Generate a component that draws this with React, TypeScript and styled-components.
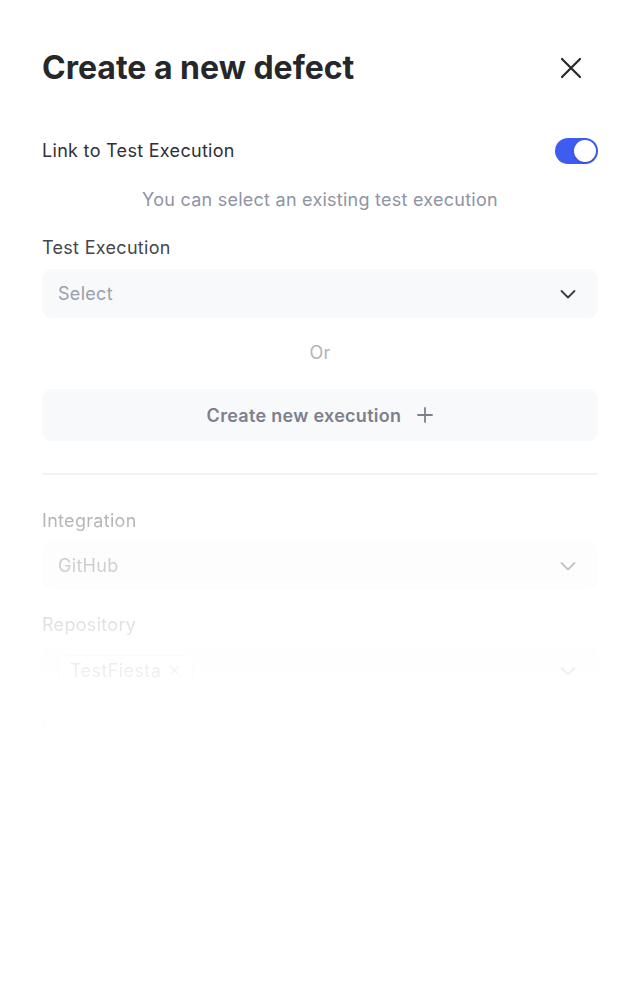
import React from 'react';
import styled, { createGlobalStyle } from 'styled-components';

const GlobalStyle = createGlobalStyle`
  html, body {
    margin: 0;
    padding: 0;
    background: #ffffff;
  }
  body {
    font-family: Inter, "Noto Sans", "Liberation Sans", sans-serif;
    -webkit-font-smoothing: antialiased;
  }
`;

const Panel = styled.div`
  width: 640px;
  min-height: 1006px;
  box-sizing: border-box;
  padding: 48px 42px 0;
  display: flex;
  flex-direction: column;
`;

const Header = styled.div`
  display: flex;
  align-items: center;
  justify-content: space-between;
  height: 40px;
`;

const Title = styled.h1`
  margin: 0;
  font-size: 32px;
  line-height: 40px;
  font-weight: 700;
  color: #26272b;
`;

const CloseButton = styled.button`
  border: none;
  background: none;
  padding: 0;
  width: 24px;
  height: 24px;
  margin-right: 15px;
  display: flex;
  align-items: center;
  justify-content: center;
  color: #26272b;
  cursor: pointer;
`;

const ToggleRow = styled.div`
  margin-top: 50px;
  display: flex;
  align-items: center;
  justify-content: space-between;
  height: 26px;
`;

const RowLabel = styled.span`
  font-size: 18px;
  line-height: 24px;
  letter-spacing: 0.3px;
  color: #2f3037;
`;

const Switch = styled.div<{ on: boolean }>`
  position: relative;
  width: 43px;
  height: 26px;
  border-radius: 13px;
  background: ${p => (p.on ? '#3f5cf1' : '#e5e7eb')};
`;

const Knob = styled.span<{ on: boolean }>`
  position: absolute;
  top: 2px;
  left: ${p => (p.on ? '19px' : '2px')};
  width: 22px;
  height: 22px;
  border-radius: 50%;
  background: #ffffff;
  box-shadow: 0 1px 3px rgba(0, 0, 0, 0.22);
`;

const Hint = styled.p<{ muted?: boolean }>`
  margin: ${p => (p.muted ? '23px 0 0' : '24px 0 0')};
  text-align: center;
  font-size: 18px;
  line-height: 24px;
  letter-spacing: 0.25px;
  color: ${p => (p.muted ? '#b2b5bd' : '#8f94a3')};
`;

const FieldLabel = styled.div<{ gap?: number }>`
  margin-top: ${p => p.gap ?? 24}px;
  font-size: 18px;
  line-height: 24px;
  letter-spacing: 0.3px;
  color: #45464e;
`;

const SelectBox = styled.div<{ gap?: number }>`
  margin-top: ${p => p.gap ?? 9}px;
  height: 49px;
  box-sizing: border-box;
  padding: 0 20px 0 16px;
  border-radius: 10px;
  background: #f8f9fb;
  display: flex;
  align-items: center;
  justify-content: space-between;
`;

const SelectText = styled.span<{ placeholder?: boolean }>`
  font-size: 18px;
  line-height: 24px;
  letter-spacing: 0.3px;
  color: ${p => (p.placeholder ? '#9a9fac' : '#5a5c66')};
`;

const Chevron = styled.svg`
  width: 20px;
  height: 20px;
  flex-shrink: 0;
  color: #3a3b42;
`;

const CreateButton = styled.button`
  margin-top: 24px;
  height: 52px;
  border: none;
  border-radius: 10px;
  background: #f8f9fb;
  display: flex;
  align-items: center;
  justify-content: center;
  gap: 16px;
  font-family: inherit;
  font-size: 18px;
  font-weight: 600;
  letter-spacing: 0.3px;
  color: #7d808b;
  cursor: pointer;
`;

const Divider = styled.hr`
  margin: 32px 0 0;
  border: none;
  height: 2px;
  background: #e3e5ea;
`;

const fade = `linear-gradient(
    to bottom,
    rgba(0, 0, 0, 0.5) 0px,
    rgba(0, 0, 0, 0.48) 50px,
    rgba(0, 0, 0, 0.36) 95px,
    rgba(0, 0, 0, 0.24) 155px,
    rgba(0, 0, 0, 0.12) 200px,
    rgba(0, 0, 0, 0.05) 255px,
    rgba(0, 0, 0, 0) 290px
  )`;

const FadedSection = styled.div`
  display: flex;
  flex-direction: column;
  -webkit-mask-image: ${fade};
  mask-image: ${fade};
`;

const Chip = styled.span`
  display: inline-flex;
  align-items: center;
  gap: 8px;
  height: 31px;
  box-sizing: border-box;
  padding: 0 12px 0 11px;
  border: 1px solid #d9dbe1;
  border-radius: 7px;
  background: #ffffff;
  font-size: 18px;
  letter-spacing: 0.4px;
  color: #30313a;
`;

const ChipX = styled.svg`
  width: 11px;
  height: 11px;
  color: #6b6e78;
`;

const ChevronIcon = () => (
  <Chevron viewBox="0 0 20 20" fill="none" stroke="currentColor" strokeWidth={1.8} strokeLinecap="round" strokeLinejoin="round">
    <path d="M3.5 7l6.5 6.5L16.5 7" />
  </Chevron>
);

export default function App() {
  return (
    <>
      <GlobalStyle />
      <Panel>
        <Header>
          <Title>Create a new defect</Title>
          <CloseButton aria-label="Close">
            <svg width="22" height="22" viewBox="0 0 22 22" fill="none" stroke="currentColor" strokeWidth={2.2} strokeLinecap="round">
              <path d="M2 2l18 18M20 2L2 20" />
            </svg>
          </CloseButton>
        </Header>

        <ToggleRow>
          <RowLabel>Link to Test Execution</RowLabel>
          <Switch on>
            <Knob on />
          </Switch>
        </ToggleRow>

        <Hint>You can select an existing test execution</Hint>

        <FieldLabel>Test Execution</FieldLabel>
        <SelectBox>
          <SelectText placeholder>Select</SelectText>
          <ChevronIcon />
        </SelectBox>

        <Hint muted>Or</Hint>

        <CreateButton>
          Create new execution
          <svg width="16" height="16" viewBox="0 0 16 16" fill="none" stroke="currentColor" strokeWidth={1.8} strokeLinecap="round">
            <path d="M8 1v14M1 8h14" />
          </svg>
        </CreateButton>

        <FadedSection>
          <Divider />

          <FieldLabel gap={34}>Integration</FieldLabel>
          <SelectBox gap={8}>
            <SelectText>GitHub</SelectText>
            <ChevronIcon />
          </SelectBox>

          <FieldLabel gap={23}>Repository</FieldLabel>
          <SelectBox>
            <Chip>
              TestFiesta
              <ChipX viewBox="0 0 12 12" fill="none" stroke="currentColor" strokeWidth={1.5} strokeLinecap="round">
                <path d="M1.5 1.5l9 9M10.5 1.5l-9 9" />
              </ChipX>
            </Chip>
            <ChevronIcon />
          </SelectBox>

          <FieldLabel gap={22}>Name</FieldLabel>
          <SelectBox>
            <SelectText placeholder>Enter name</SelectText>
          </SelectBox>
        </FadedSection>
      </Panel>
    </>
  );
}
